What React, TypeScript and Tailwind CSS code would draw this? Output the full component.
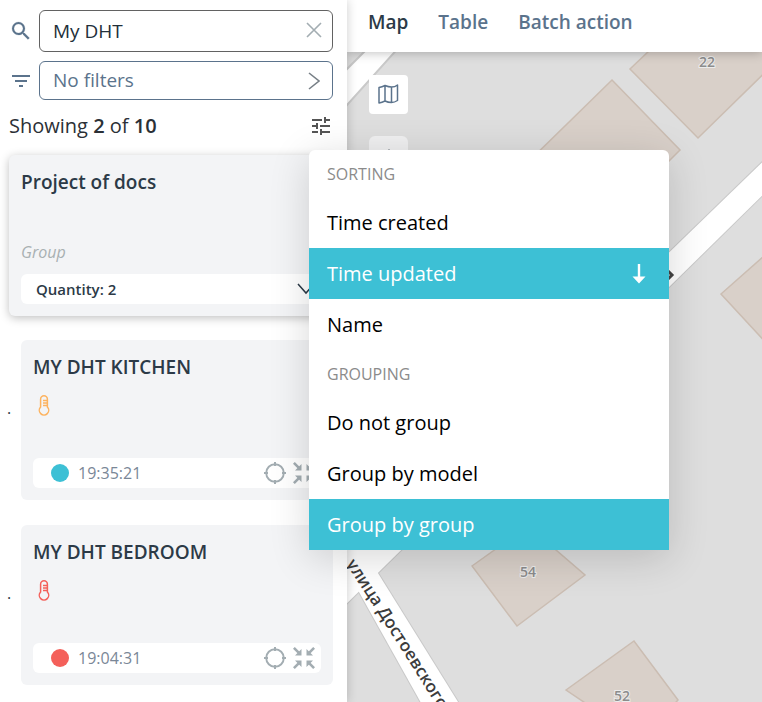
import { useState } from "react";

const baseFont = "font-['Open_Sans','Noto_Sans',sans-serif]";

const tabs = ["Map", "Table", "Batch action"];

const sortings = ["Time created", "Time updated", "Name"];
const groupings = ["Do not group", "Group by model", "Group by group"];

const devices = [
  {
    name: "MY DHT KITCHEN",
    time: "19:35:21",
    dot: "bg-[#3dc0d5]",
    thermometer: "text-[#fdb35f]",
  },
  {
    name: "MY DHT BEDROOM",
    time: "19:04:31",
    dot: "bg-[#f4605a]",
    thermometer: "text-[#f4605a]",
  },
];

function SearchIcon() {
  return (
    <svg width="24" height="24" viewBox="0 0 24 24" fill="currentColor" stroke="currentColor" strokeWidth="0.2" aria-hidden="true">
      <path d="M15.5 14h-.79l-.28-.27A6.47 6.47 0 0 0 16 9.5 6.5 6.5 0 1 0 9.5 16c1.61 0 3.09-.59 4.23-1.57l.27.28v.79l5 4.99L20.49 19l-4.99-5zm-6 0C7.01 14 5 11.99 5 9.5S7.01 5 9.5 5 14 7.01 14 9.5 11.99 14 9.5 14z" />
    </svg>
  );
}

function FilterIcon() {
  return (
    <svg width="24" height="24" viewBox="0 0 24 24" fill="currentColor" aria-hidden="true">
      <path d="M10 18h4v-2h-4v2zM3 6v2h18V6H3zm3 7h12v-2H6v2z" />
    </svg>
  );
}

function TuneIcon() {
  return (
    <svg width="24" height="24" viewBox="0 0 24 24" fill="currentColor" aria-hidden="true">
      <path d="M3 17v2h6v-2H3zM3 5v2h10V5H3zm10 16v-2h8v-2h-8v-2h-2v6h2zM7 9v2H3v2h4v2h2V9H7zm14 4v-2H11v2h10zm-6-4h2V7h4V5h-4V3h-2v6z" />
    </svg>
  );
}

function ThermometerIcon() {
  return (
    <svg width="12" height="22" viewBox="0 0 12 22" fill="none" stroke="currentColor" strokeWidth="1.5" aria-hidden="true">
      <path d="M2.6 12V4.2a3.4 3.4 0 0 1 6.8 0V12a4.7 4.7 0 1 1-6.8 0z" />
      <path d="M5 5.5h4M5 8h4M5 10.5h4" />
    </svg>
  );
}

function TargetIcon() {
  return (
    <svg width="22" height="22" viewBox="0 0 22 22" fill="none" stroke="currentColor" strokeWidth="2" aria-hidden="true">
      <circle cx="11" cy="11" r="8.8" strokeWidth="1.9" />
      <path d="M11 0v4M11 18v4M0 11h4M18 11h4" />
    </svg>
  );
}

function CollapseIcon() {
  return (
    <svg width="22" height="22" viewBox="0 0 22 22" fill="currentColor" aria-hidden="true">
      <g stroke="currentColor" strokeWidth="2.6">
        <path d="M.9.9l6 6M21.1.9l-6 6M.9 21.1l6-6M21.1 21.1l-6-6" />
      </g>
      <path d="M8.500 2v6.500H2zM13.500 2v6.500H20zM8.500 20v-6.500H2zM13.500 20v-6.500H20z" />
    </svg>
  );
}

function MapIcon() {
  return (
    <svg width="21" height="20" viewBox="0 0 21 20" fill="none" stroke="currentColor" strokeWidth="1.5" strokeLinejoin="round" aria-hidden="true">
      <path d="M1 3.500Q4 3 7 1.500q3.500 1.500 6.500 1.500 3.500 0 6-2v15.500q-3 2-6 2-3.500 0-6.500-1.500-3 1.500-6 2zM7 1.500v15.500M13.500 3v15.500" />
    </svg>
  );
}

function ArrowDownIcon() {
  return (
    <svg width="14" height="20" viewBox="0 0 14 20" fill="currentColor" aria-hidden="true">
      <path d="M5.8 0h2.400v12.500h5.300L7 19.500.5 12.500h5.300z" />
    </svg>
  );
}

function StreetMap() {
  return (
    <svg
      className="absolute inset-0 h-full w-full"
      viewBox="347 52 415 650"
      preserveAspectRatio="xMinYMin slice"
      role="img"
      aria-label="Street map"
    >
      <rect x="347" y="52" width="2000" height="2000" fill="#dedede" />
      {/* road casings first, fills above them so that the junction stays open */}
      <g fill="#fff" stroke="#c9c9c9" strokeWidth="2">
        <path d="M330 86 381 35 410 35 347 105 330 123z" />
        <path d="M780 145 330 581 330 620 780 178z" />
        <path d="M330 540 425 710 463 710 368 557 345 520z" />
      </g>
      <g fill="#fff">
        <path d="M780 145 330 581 330 620 780 178z" />
        <path d="M330 540 425 710 463 710 368 557 345 520z" />
      </g>
      <g fill="#d9d0c9" stroke="#cbbdb2" strokeWidth="1.5">
        <path d="M650 50 630 69 698 138 790 48z" />
        <path d="M612 80 680 150 600 230 520 170z" />
        <path d="M721 294 780 242 780 358z" />
        <path d="M472 566 528 526 585 575 517 626z" />
        <path d="M566 690 634 641 678 700 640 740z" />
      </g>
      <g
        className={`${baseFont} text-sm font-semibold`}
        fill="#8c8c8c"
        stroke="#ececec"
        strokeWidth="2"
        paintOrder="stroke"
        textAnchor="middle"
      >
        <text x="707" y="67">22</text>
        <text x="528" y="577">54</text>
        <text x="622" y="701">52</text>
      </g>
      <path id="street" d="M346 564 Q378 612 455 735" fill="none" />
      <text className={`${baseFont} text-[17px] font-semibold`} fill="#3c3c3c" stroke="#fff" strokeWidth="2" paintOrder="stroke">
        <textPath href="#street">улица Достоевского</textPath>
      </text>
      <path d="M667 270 672 275 668 279" fill="none" stroke="#444" strokeWidth="3" />
    </svg>
  );
}

function DeviceCard({ device }: { device: (typeof devices)[number] }) {
  return (
    <li className="flex items-center">
      <span className="w-[21px] shrink-0 pb-6 pl-[7px] text-base text-[#2c3a47]">.</span>
      <article className="flex h-40 min-w-0 flex-1 flex-col rounded-md bg-[#f3f4f6] p-3">
        <h2 className="text-[19px] leading-[30px] font-semibold text-[#2c3a47]">{device.name}</h2>
        <span className={`mt-[13px] ml-[5px] ${device.thermometer}`}>
          <ThermometerIcon />
        </span>
        <div className="mt-auto flex h-[30px] items-center rounded-md bg-white pr-[6px] pl-[18px] text-[#a3adb2]">
          <span className={`size-[18px] rounded-full ${device.dot}`} />
          <time className="ml-[9px] flex-1 text-base text-[#7a8797]">{device.time}</time>
          <button type="button" aria-label="Locate">
            <TargetIcon />
          </button>
          <button type="button" aria-label="Collapse" className="ml-[7px]">
            <CollapseIcon />
          </button>
        </div>
      </article>
    </li>
  );
}

type MenuGroupProps = {
  title: string;
  items: string[];
  selected: string;
  arrow?: boolean;
  onSelect: (item: string) => void;
};

function MenuGroup({ title, items, selected, arrow, onSelect }: MenuGroupProps) {
  return (
    <section aria-label={title}>
      <h3 className="flex h-[47px] items-center px-[18px] text-base text-[#8b8b8b] uppercase">{title}</h3>
      {items.map((item) => (
        <button
          key={item}
          type="button"
          onClick={() => onSelect(item)}
          className={`flex h-[51px] w-full items-center justify-between pr-[23px] pl-[18px] text-left text-xl ${
            item === selected ? "bg-[#3dc0d5] text-white" : "bg-white text-black"
          }`}
        >
          {item}
          {arrow && item === selected && <ArrowDownIcon />}
        </button>
      ))}
    </section>
  );
}

export default function App() {
  const [query, setQuery] = useState("My DHT");
  const [sorting, setSorting] = useState("Time updated");
  const [grouping, setGrouping] = useState("Group by group");

  return (
    <div className={`relative flex min-h-screen overflow-hidden bg-white ${baseFont}`}>
      <aside className="relative z-10 w-[347px] shrink-0 bg-white pt-[10px] pr-[14px] shadow-[0_0_10px_rgba(0,0,0,0.2)]">
        <div className="flex items-center">
          <label htmlFor="search" aria-label="Search" className="w-[39px] shrink-0 pl-[9px] text-[#5b738c]">
            <SearchIcon />
          </label>
          <div className="flex h-[42px] min-w-0 flex-1 items-center rounded-md border border-[#626262] pr-[10px] pl-[13px]">
            <input
              id="search"
              value={query}
              onChange={(e) => setQuery(e.target.value)}
              className="min-w-0 flex-1 text-[19px] text-[#222f3a] outline-none"
            />
            <button type="button" aria-label="Clear" onClick={() => setQuery("")} className="pb-[2px] text-[#a3adb2]">
              <svg width="16" height="16" viewBox="0 0 16 16" stroke="currentColor" strokeWidth="1.6" aria-hidden="true">
                <path d="M1 1l14 14M15 1 1 15" />
              </svg>
            </button>
          </div>
        </div>

        <div className="mt-[9px] flex items-center">
          <span className="w-[39px] shrink-0 pl-[9px] text-[#5b738c]">
            <FilterIcon />
          </span>
          <button
            type="button"
            className="flex h-[39px] flex-1 items-center justify-between rounded-md border border-[#5b738c] pr-[12px] pl-[13px] text-[19px] text-[#5b738c]"
          >
            No filters
            <svg width="12" height="18" viewBox="0 0 12 18" fill="none" stroke="#777f86" strokeWidth="1.6" aria-hidden="true">
              <path d="M1 1l10 8L1 17" />
            </svg>
          </button>
        </div>

        <div className="mt-3 flex items-center justify-between pl-[9px] text-xl leading-7 text-[#2b3036]">
          <p>
            Showing <b className="font-semibold">2</b> of <b className="font-semibold">10</b>
          </p>
          <button type="button" aria-label="Sorting and grouping" className="text-[#555]">
            <TuneIcon />
          </button>
        </div>

        <article className="mt-[15px] ml-[9px] flex h-[161px] flex-col rounded-md bg-[#f3f4f6] p-3 shadow-[0_2px_10px_rgba(0,0,0,0.25)]">
          <h2 className="text-[19px] leading-[30px] font-semibold text-[#2c3a47]">Project of docs</h2>
          <p className="mt-auto mb-[10px] text-base leading-[24px] text-[#a8b0b2] italic">Group</p>
          <button
            type="button"
            className="flex h-[30px] items-center justify-between rounded-md bg-white pr-[6px] pl-[15px] text-[15px] font-semibold text-[#2c3a47]"
          >
            Quantity: 2
            <svg width="18" height="12" viewBox="0 0 18 12" fill="none" stroke="currentColor" strokeWidth="1.5" aria-hidden="true">
              <path d="M1 1l8 9 8-9" />
            </svg>
          </button>
        </article>

        <ul className="mt-6 flex flex-col gap-[25px]">
          {devices.map((device) => (
            <DeviceCard key={device.name} device={device} />
          ))}
        </ul>
      </aside>

      <main className="flex min-w-0 flex-1 flex-col">
        <nav className="relative z-[5] flex h-[52px] items-start gap-[30px] bg-white pt-2 pl-[21px] text-[19px] leading-7 font-semibold shadow-[0_1px_10px_rgba(0,0,0,0.25)]">
          {tabs.map((tab) => (
            <a key={tab} href="#map" className={tab === "Map" ? "text-[#2c3a47]" : "text-[#5b738c]"}>
              {tab}
            </a>
          ))}
        </nav>
        <div className="relative flex-1 overflow-hidden">
          <StreetMap />
          <div className="relative flex w-fit flex-col gap-[22px] pt-[23px] pl-[22px]">
            <button
              type="button"
              aria-label="Map layers"
              className="flex size-[39px] items-center justify-center rounded-sm bg-white pb-[2px] text-[#5b738c]"
            >
              <MapIcon />
            </button>
            <button
              type="button"
              aria-label="Zoom in"
              className="flex size-[39px] items-center justify-center rounded-md bg-[#f0f0f1] text-[#b5b9bd]"
            >
              <svg width="14" height="14" viewBox="0 0 14 14" stroke="currentColor" strokeWidth="2" aria-hidden="true">
                <path d="M7 0v14M0 7h14" />
              </svg>
            </button>
          </div>
        </div>
      </main>

      <div className="absolute top-[150px] left-[309px] z-20 w-[360px] rounded-t-md bg-white shadow-[0_8px_40px_rgba(0,0,0,0.16)]">
        <MenuGroup title="Sorting" items={sortings} selected={sorting} arrow onSelect={setSorting} />
        <MenuGroup title="Grouping" items={groupings} selected={grouping} onSelect={setGrouping} />
      </div>
    </div>
  );
}
